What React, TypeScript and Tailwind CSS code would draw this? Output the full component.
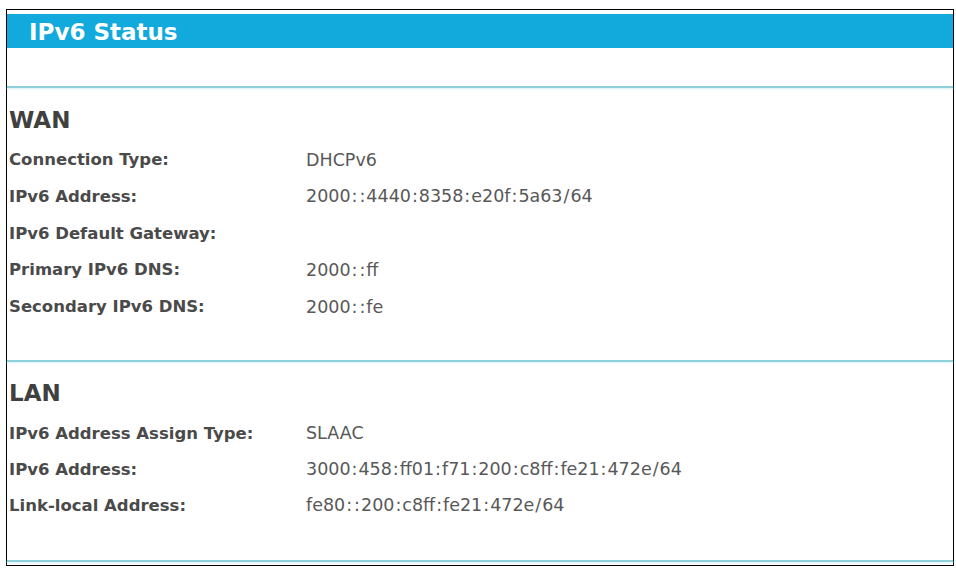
const FONT = "font-['DejaVu_Sans','Verdana',sans-serif]";

type Row = { label: string; value: string };

const wan: Row[] = [
  { label: "Connection Type:", value: "DHCPv6" },
  { label: "IPv6 Address:", value: "2000::4440:8358:e20f:5a63/64" },
  { label: "IPv6 Default Gateway:", value: "" },
  { label: "Primary IPv6 DNS:", value: "2000::ff" },
  { label: "Secondary IPv6 DNS:", value: "2000::fe" },
];

const lan: Row[] = [
  { label: "IPv6 Address Assign Type:", value: "SLAAC" },
  { label: "IPv6 Address:", value: "3000:458:ff01:f71:200:c8ff:fe21:472e/64" },
  { label: "Link-local Address:", value: "fe80::200:c8ff:fe21:472e/64" },
];

// the router UI's Verdana has wider punctuation than DejaVu, pad it a bit
function Addr({ text }: { text: string }) {
  return (
    <>
      {text.split(/([:/])/).map((part, i) =>
        part === ":" || part === "/" ? (
          <span key={i} className="mx-[1px]">
            {part}
          </span>
        ) : (
          part
        ),
      )}
    </>
  );
}

function Divider() {
  return <div className="h-[2px] bg-[#8fd0dc] shadow-[0_1px_2px_#d6f1f6]" />;
}

function InfoRow({ row, className }: { row: Row; className: string }) {
  return (
    <div className={`flex items-center ${className}`}>
      <div className="w-[299px] pl-[2px] text-[16.5px] font-bold leading-none text-[#4a4a4a]">
        {row.label}
      </div>
      <div className="text-[17.5px] leading-none text-[#585858]">
        <Addr text={row.value} />
      </div>
    </div>
  );
}

export default function App() {
  return (
    <div className={`h-[568px] w-[956px] bg-white pl-[6px] pt-[9px] ${FONT}`}>
      <div className="h-[557px] w-[948px] border border-black pt-[4px]">
        {/* title bar */}
        <div className="flex h-[34px] items-center bg-[#12a9dd] pl-[22px] pt-[3px] text-[23px] font-bold leading-none text-white">
          IPv6 Status
        </div>
        <div className="h-[38px]" />
        <Divider />

        {/* WAN */}
        <div className="mt-[16px] flex h-[32px] items-center pl-[2px] text-[23px] font-bold leading-none text-[#404040]">
          WAN
        </div>
        <div className="mt-[6px]">
          {wan.map((r) => (
            <InfoRow key={r.label} row={r} className="h-[36.75px]" />
          ))}
        </div>
        <div className="h-[34px]" />
        <Divider />

        {/* LAN */}
        <div className="mt-[16px] flex h-[32px] items-center pl-[2px] text-[23px] font-bold leading-none text-[#404040]">
          LAN
        </div>
        <div className="mt-[6px]">
          {lan.map((r) => (
            <InfoRow key={r.label} row={r} className="h-[36px]" />
          ))}
        </div>
        <div className="h-[36px]" />
        <Divider />
      </div>
    </div>
  );
}
